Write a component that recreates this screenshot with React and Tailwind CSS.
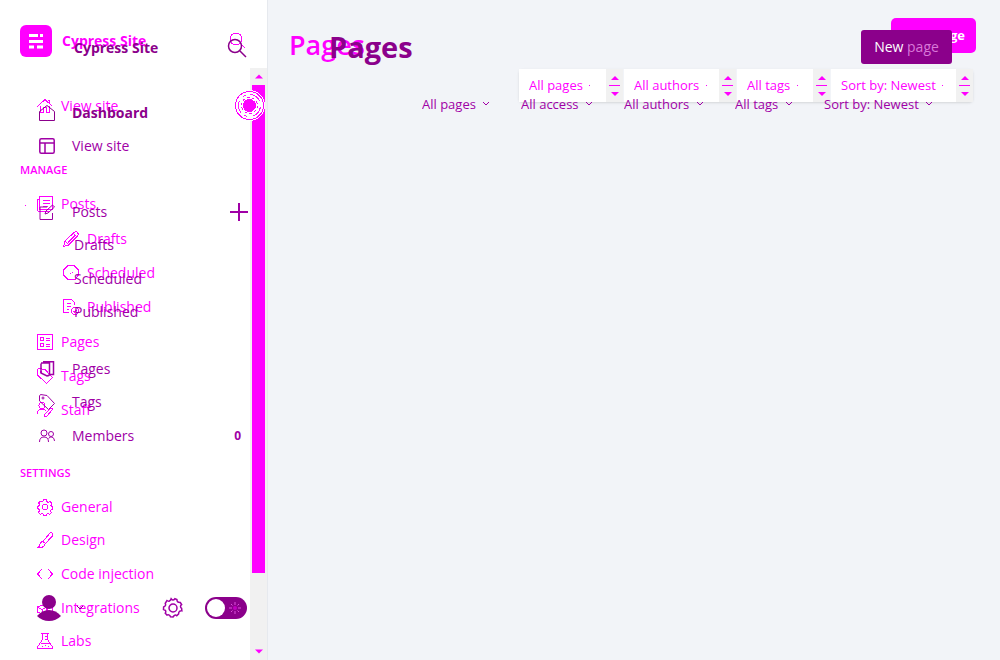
import React from "react";

const paths = {
  home: <><path d="M.5 8.500 8 1.500l7.500 7M3.500 7.500v7h3v-5h3v5h3v-7M10.500 2.500h2v3" /></>,
  post: <><path d="M2.500.5h13v13h-13zM2.500 3.500h-2v10q0 2 2 2h9M5.500 4.500h7M5.500 7.500h7M5.500 10.500h5" /></>,
  pencil: <><path d="M.5 15.500l1.500-5.500 9-8.500q2-1.500 3.500 0t0 3.500l-9 9zM2 10l4 4M5 11.500l7-7M10 2l4 4" /></>,
  clock: <><path d="M5 .5h6l4.500 4.500v5L12 14.500H5L.5 10V5z" /><path d="M7.500 7.500v1M8.500 7.500h1" /></>,
  published: <><path d="M11.500 5.500v-2l-3-3h-8v13h5M3.500 4.500H8M3.500 7.500H8M3.500 10.500H6" /><circle cx="12" cy="12" r="3.500" /><path d="M10.500 12l1 1 2-2" /></>,
  pages: <><path d="M.5.5h15v15H.5zM3.500 3.500h3v3h-3zM3.500 9.500h3v3h-3zM9 4.500h4M9 6.500h4M9 10.500h4M9 12.500h4" /></>,
  tag: <><path d="M.5 2v5l9 8.500 6-6L8 1.500 1.500.5z" /><circle cx="4" cy="4" r="1" /></>,
  staff: <><circle cx="5" cy="3.500" r="3" /><path d="M.5 12V10q1-3 4.500-3 3 0 3.500 2M8 15l-.5-2.500 6-6q2-1 2 1L10 14z" /></>,
  gear: <><circle cx="8" cy="8" r="2.800" /><path d="M6.500.8h3l.5 2 1.300.6 1.900-.9 1.600 2-.9 1.800.5 1.300 1.100.4v2.200l-1.300.5-.6 1.300.8 1.700-1.900 1.700-1.600-.9-1.400.6-.5 1.400h-2l-.8-1.500-1.300-.5-1.700.8-1.700-1.900.9-1.600L2 10.200.5 9.600V7.400L2 6.800l.5-1.300-.9-1.700L3.300 2l1.800.8L6 2.300z" /></>,
  cog: <><circle cx="8" cy="8" r="3.200" /><path d="M6.500.6q1.500 2 3 0l1.600.6q0 2.600 2.800 2.400l1 1.700q-1.800 1.300 0 3l.2 2q-2.700-.3-2.600 2.400l-1.500 1.500q-1.600-1.400-3 1l-2-.1q-.6-2.200-2.800-1.400l-1.400-1.500q1.400-2.200-1.400-3l.1-2q2.300-.9 1.300-2.900L3.200 2q2.200 1.500 3.300-1.400z" /></>,
  brush: <><path d="M.5 15.500Q3 14.500 3 12q1-3 3.500-2t1 3.500-7 2zM6 9.500l6.500-8q2-1.500 3 0t-.5 3L8 12" /></>,
  code: <path d="M5 3 .5 8 5 13M11 3l4.500 5-4.500 5" />,
  blocks: <><path d="M.5 7 5 5l4 2v5l-4 2-4.500-2zM.5 7.500 5 9.500l4-2M5 9.500V14M9.500 6.500v-4h4v4M10.500 7.500h5v6h-5z" /></>,
  flask: <><path d="M4 .5h8M5.500.5v6L.5 14v1.500h15V14l-5-7.500v-6M3.500 10.500h9M8 3.500h2.500M8 6.500h2.500" /><path d="M5 13.500h1M8 12.500h1M10.500 13.500h1" /></>,
  layout: <><rect x=".8" y=".8" width="14.400" height="14.400" rx="1.500" /><path d="M1 5h14M6 5v10" /></>,
  house: <path d="M.5 6.500 8 .5l7.500 6v9H.5z" />,
  edit: <><path d="M8 3H1v12.500h12.500V9M6 10l1-3 6.500-6 2 2-6.500 6z" /></>,
  book: <><path d="M2 2.500v9.500l6 3 2-.5M2 2h8.500v12L8 15M4 .8h10.500v12.700H11" /></>,
  members: <><circle cx="5" cy="5" r="3" /><circle cx="12" cy="6" r="2.500" /><path d="M.5 14q0-5 4.500-5t4.500 5M9.500 10.500q1.500-2 3.500-1.500 2.500 1 2.500 4" /></>,
};

function Icon({ name, className = "size-4", stroke = 1, crisp }) {
  return (
    <svg viewBox="0 0 16 16" className={"shrink-0 overflow-visible " + className} fill="none" stroke="currentColor" strokeWidth={stroke} shapeRendering={crisp ? "crispEdges" : "auto"} aria-hidden="true">
      {paths[name]}
    </svg>
  );
}

function Chevron() {
  return (
    <svg viewBox="0 0 8 6" className="h-[6px] w-2 shrink-0" fill="none" stroke="currentColor" aria-hidden="true">
      <path d="m1 1 3 3 3-3" />
    </svg>
  );
}

function Row({ icon, children, sub }) {
  return (
    <a href="#" className={sub ? "flex items-center gap-2 pl-[63px]" : "flex items-center gap-2 pl-[37px]"}>
      <Icon name={icon} crisp />
      {children}
    </a>
  );
}

function TopRow({ icon, children, bold, stroke = 1, end }) {
  return (
    <div className="flex items-center justify-between pr-5">
      <a href="#" className={bold ? "flex items-center gap-[17px] pl-[39px] font-bold text-[#8b008b]" : "flex items-center gap-[17px] pl-[39px]"}>
        <Icon name={icon} stroke={stroke} />
        {children}
      </a>
      {end}
    </div>
  );
}

function BaseSidebar() {
  return (
    <aside className="flex border-r border-[#e6e9ee] bg-white text-sm text-[#ff00ff]">
      <div className="min-w-0 flex-1">
        <header className="flex h-[68px] items-start pt-[25px] pl-5">
          <svg viewBox="0 0 32 32" className="size-8" aria-hidden="true">
            <rect width="32" height="32" rx="6" fill="currentColor" />
            <path d="M9 10.500h9M20 10.500h3M9 16.500h14M9 22h5M17 22h6" stroke="#fff" strokeWidth="3" />
          </svg>
          <span className="pt-[6px] pl-[10px] font-bold whitespace-nowrap">Cypress Site</span>
          <button aria-label="Search site" className="mr-[5px] ml-auto pt-2">
            <svg viewBox="0 0 16 16" className="size-4 overflow-visible" fill="none" stroke="currentColor" shapeRendering="crispEdges" aria-hidden="true">
              <circle cx="7" cy="6" r="6" />
              <path d="m11 10 5 5" />
            </svg>
          </button>
        </header>
        <nav className="pt-[21px]">
          <div className="grid h-[34px]"><Row icon="home">View site</Row></div>
          <h2 className="mt-[37px] pl-5 text-[11px] leading-5 font-semibold">MANAGE</h2>
          <div className="relative mt-[7px] grid auto-rows-[34px]">
            <span className="absolute top-[18px] left-[25px] size-px bg-[#ff00ff]" />
            <Row icon="post">Posts</Row>
            <div className="grid h-[104px] grid-rows-3 py-px">
              <Row icon="pencil" sub>Drafts</Row>
              <Row icon="clock" sub>Scheduled</Row>
              <Row icon="published" sub>Published</Row>
            </div>
          </div>
          <div className="mt-[70px] grid auto-rows-[34px]">
            <Row icon="pages">Pages</Row>
            <Row icon="tag">Tags</Row>
            <Row icon="staff">Staff</Row>
          </div>
          <h2 className="mt-9 pl-5 text-[11px] leading-5 font-semibold">SETTINGS</h2>
          <div className="mt-[7px] grid h-[168px] grid-rows-5">
            <Row icon="gear">General</Row>
            <Row icon="brush">Design</Row>
            <Row icon="code">Code injection</Row>
            <Row icon="blocks">Integrations</Row>
            <Row icon="flask">Labs</Row>
          </div>
        </nav>
      </div>
      <div className="relative mt-[68px] flex w-[17px] flex-col items-center bg-[#f1f1f1]">
        <svg viewBox="0 0 8 4" className="my-[6px] h-[5px] w-2 shrink-0" fill="currentColor" aria-hidden="true"><path d="M0 4 4 0l4 4z" /></svg>
        <div className="h-[488px] w-[13px] bg-[#ff00ff]" />
        <svg viewBox="0 0 8 4" className="mt-auto mb-[6px] h-[5px] w-2" fill="currentColor" aria-hidden="true"><path d="M0 0l4 4 4-4z" /></svg>
        <button aria-label="Open site" className="absolute top-[22px] right-[2px] size-[31px] rounded-full">
          <svg viewBox="0 0 31 31" className="size-[31px]" fill="none" stroke="currentColor" shapeRendering="crispEdges" aria-hidden="true">
            <circle cx="15.500" cy="15.500" r="15.500" fill="#fff" stroke="none" />
            <circle cx="15.500" cy="15.500" r="14" />
            <circle cx="15.500" cy="15.500" r="11" strokeDasharray="12 6 3 4" strokeDashoffset="-52" className="opacity-90" />
            <circle cx="15.500" cy="15.500" r="8" strokeDasharray="3 2" />
            <circle cx="15.500" cy="15.500" r="6" fill="currentColor" />
          </svg>
        </button>
      </div>
    </aside>
  );
}

function OverlaySidebar() {
  return (
    <aside className="pointer-events-none z-10 flex flex-col pt-[36px] text-sm text-[#a000a6] *:pointer-events-auto">
      <header className="flex h-6 items-center justify-between pr-[22px] pl-[74px] font-bold text-[#8b008b]">
        <span>Cypress Site</span>
        <button aria-label="Search">
          <svg viewBox="0 0 18 18" className="size-[18px] overflow-visible" fill="none" stroke="currentColor" strokeWidth="1.500" aria-hidden="true">
            <circle cx="7" cy="7" r="6.500" />
            <path d="m12 12 6 6" />
          </svg>
        </button>
      </header>
      <nav className="pt-[36px]">
        <div className="grid h-[67px] grid-rows-2">
          <TopRow icon="house" bold>Dashboard</TopRow>
          <TopRow icon="layout" stroke={1.5}>View site</TopRow>
        </div>
        <div className="mt-8 grid h-[134px] grid-rows-4">
          <TopRow icon="edit" end={
            <button aria-label="New post"><svg viewBox="0 0 18 18" className="size-[18px]" stroke="currentColor" strokeWidth="2"><path d="M9 0v18M0 9h18" /></svg></button>
          }>Posts</TopRow>
          <a href="#" className="flex items-center pl-[74px]">Drafts</a>
          <a href="#" className="flex items-center pl-[74px]">Scheduled</a>
          <a href="#" className="flex items-center pl-[74px]">Published</a>
        </div>
        <div className="mt-[23px] grid h-[101px] grid-rows-3">
          <TopRow icon="book" stroke={1.5}>Pages</TopRow>
          <TopRow icon="tag">Tags</TopRow>
          <TopRow icon="members" end={<span className="pr-[7px] text-xs font-bold">0</span>}>Members</TopRow>
        </div>
      </nav>
      <footer className="mt-[141px] flex items-center pr-[21px] pl-[37px]">
        <button aria-label="Account" className="flex items-center gap-[15px] text-[#8b008b]">
          <svg viewBox="0 0 24 28" className="h-7 w-6" fill="currentColor"><circle cx="12" cy="8" r="7" /><path d="M0 22q5-6 12-6t12 6q-5 5-12 5T0 22z" /></svg>
          <Chevron />
        </button>
        <button aria-label="Settings" className="ml-auto pr-[22px]"><Icon name="cog" className="size-5" stroke={1.2} /></button>
        <label className="grid h-[22px] w-[42px] items-center">
          <input type="checkbox" role="switch" aria-label="Night shift" className="col-start-1 row-start-1 h-[22px] w-[42px] appearance-none rounded-full bg-[#8b008b]" />
          <svg viewBox="0 0 42 22" className="pointer-events-none col-start-1 row-start-1" fill="none" aria-hidden="true">
            <circle cx="11" cy="11" r="9" fill="#fff" />
            <path d="M30 5v3M30 14v3M24 11h3M33 11h3M26 7l1.500 1.500M34 7l-1.500 1.500M26 15l1.500-1.500M34 15l-1.500-1.500" stroke="#dc50dc" />
            <circle cx="30" cy="11" r="2" fill="#c000c0" />
          </svg>
        </label>
      </footer>
    </aside>
  );
}

function Filter({ label, className }) {
  return (
    <div className="flex bg-white">
      <div className={"flex items-center " + className}>
        <select aria-label={label} className="h-[33px] appearance-none pl-[10px] text-[13px]">
          <option>{label}</option>
        </select>
        <span className="ml-[6px] size-px bg-[#ff00ff]" />
      </div>
      <svg viewBox="0 0 17 33" className="h-[33px] w-[17px] bg-[#f1f1f1]" fill="currentColor" aria-hidden="true">
        <path d="M5 11l4-4 4 4zM3 16h11v1H3zM5 23h8l-4 4z" />
      </svg>
    </div>
  );
}

function BaseMain() {
  return (
    <div className="flex flex-col pr-6 text-[#ff00ff]">
      <div className="flex justify-between pt-[18px] pl-[21px]">
        <h1 className="pt-[9px] text-[27px] leading-9 font-semibold">Pages</h1>
        <button className="h-[35px] w-[85px] rounded-[5px] bg-[#ff00ff] pr-[11px] text-right text-[13px] font-bold text-white">New page</button>
      </div>
      <div className="mt-[6px] mr-[3px] flex gap-px self-end rounded shadow-sm">
        <Filter label="All pages" className="w-[87px]" />
        <Filter label="All authors" className="w-[95px]" />
        <Filter label="All tags" className="w-[76px]" />
        <Filter label="Sort by: Newest" className="w-[125px]" />
      </div>
    </div>
  );
}

function MenuFilter({ label }) {
  return (
    <div className="flex items-center gap-[6px]">
      <select aria-label={label} className="appearance-none bg-transparent"><option>{label}</option></select>
      <Chevron />
    </div>
  );
}

function OverlayMain() {
  return (
    <div className="z-10 flex flex-col pt-[30px] pr-12 text-[#a000a6]">
      <div className="flex justify-between pl-[61px]">
        <h2 className="text-[29px] leading-[34px] font-bold text-[#8b008b]">Pages</h2>
        <button className="h-[34px] w-[91px] rounded-[3px] bg-[#8b008b] text-sm text-white">
          New <span className="text-[#d878d8]">page</span>
        </button>
      </div>
      <div className="mt-[30px] mr-[19px] flex gap-[31px] self-end text-[13px] leading-5">
        <MenuFilter label="All pages" />
        <MenuFilter label="All access" />
        <MenuFilter label="All authors" />
        <MenuFilter label="All tags" />
        <MenuFilter label="Sort by: Newest" />
      </div>
    </div>
  );
}

export default function App() {
  return (
    <div className="grid min-h-screen grid-cols-[268px_1fr] overflow-hidden bg-[#f2f4f8] font-['Open_Sans',sans-serif]">
      <div className="grid *:col-start-1 *:row-start-1">
        <BaseSidebar />
        <OverlaySidebar />
      </div>
      <main className="grid content-start *:col-start-1 *:row-start-1">
        <BaseMain />
        <OverlayMain />
      </main>
    </div>
  );
}
